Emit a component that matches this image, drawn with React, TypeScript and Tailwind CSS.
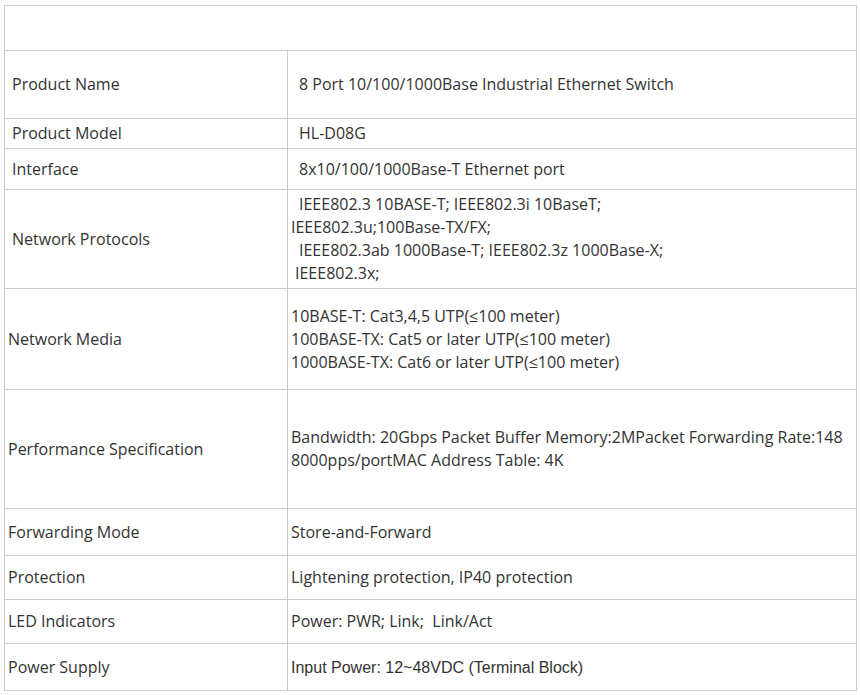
const rows: { label: string; labelPad: string; h: string; value: React.ReactNode; arial?: boolean }[] = [
  {
    label: 'Product Name',
    labelPad: 'pl-[7px]',
    h: 'h-[68px]',
    value: <span className="pl-[8px]">8 Port 10/100/1000Base Industrial Ethernet Switch</span>,
  },
  { label: 'Product Model', labelPad: 'pl-[7px]', h: 'h-[30px]', value: <span className="pl-[8px]">HL-D08G</span> },
  {
    label: 'Interface',
    labelPad: 'pl-[7px]',
    h: 'h-[41px]',
    value: <span className="pl-[8px]">8x10/100/1000Base-T Ethernet port</span>,
  },
  {
    label: 'Network Protocols',
    labelPad: 'pl-[7px]',
    h: 'h-[99px]',
    value: (
      <>
        <span className="pl-[8px]">IEEE802.3 10BASE-T; IEEE802.3i 10BaseT;</span>
        <br />
        IEEE802.3u;100Base-TX/FX;
        <br />
        <span className="pl-[8px]">IEEE802.3ab 1000Base-T; IEEE802.3z 1000Base-X;</span>
        <br />
        <span className="pl-[4px]">IEEE802.3x;</span>
      </>
    ),
  },
  {
    label: 'Network Media',
    labelPad: 'pl-[3px]',
    h: 'h-[101px]',
    value: (
      <>
        10BASE-T: Cat3,4,5 UTP(≤100 meter)
        <br />
        100BASE-TX: Cat5 or later UTP(≤100 meter)
        <br />
        1000BASE-TX: Cat6 or later UTP(≤100 meter)
      </>
    ),
  },
  {
    label: 'Performance Specification',
    labelPad: 'pl-[3px]',
    h: 'h-[119px]',
    value: (
      <>
        Bandwidth: 20Gbps Packet Buffer Memory:2MPacket Forwarding Rate:148
        <br />
        8000pps/portMAC Address Table: 4K
      </>
    ),
  },
  { label: 'Forwarding Mode', labelPad: 'pl-[3px]', h: 'h-[47px]', value: 'Store-and-Forward' },
  { label: 'Protection', labelPad: 'pl-[3px]', h: 'h-[44px]', value: 'Lightening protection, IP40 protection' },
  {
    label: 'LED Indicators',
    labelPad: 'pl-[3px]',
    h: 'h-[44px]',
    value: <span className="whitespace-pre">Power: PWR; Link;  Link/Act</span>,
  },
  {
    label: 'Power Supply',
    labelPad: 'pl-[3px]',
    h: 'h-[47px]',
    value: 'Input Power: 12~48VDC (Terminal Block)',
    arial: true,
  },
]

export default function App() {
  return (
    <div className="min-h-[695px] bg-white pl-[4px] pt-[5px] font-['Open_Sans',sans-serif] text-[16px] leading-[23px] text-[#333333]">
      <table className="w-[853px] border-collapse">
        <tbody>
          <tr className="h-[45px]">
            <td colSpan={2} className="border border-[#cccccc]" />
          </tr>
          {rows.map((row) => (
            <tr key={row.label} className={row.h}>
              <td className={`w-[283px] border border-[#cccccc] align-middle ${row.labelPad}`}>{row.label}</td>
              <td
                className={`border border-[#cccccc] pl-[3px] align-middle ${
                  row.arial ? "font-['Liberation_Sans',Arial,sans-serif]" : ''
                }`}
              >
                {row.value}
              </td>
            </tr>
          ))}
        </tbody>
      </table>
    </div>
  )
}
